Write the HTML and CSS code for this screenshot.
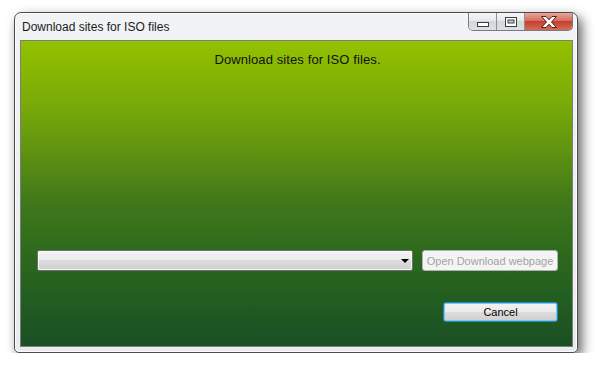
FILE: index.html
```html
<!DOCTYPE html>
<html lang="en">
<head>
  <meta charset="UTF-8" />
  <title>Download sites for ISO files</title>
  <link rel="stylesheet" href="styles.css">
</head>
<body>

  <div class="desktop">
    <div class="window">
      <div class="titlebar">
        <span class="title">Download sites for ISO files</span>
        <div class="caption-btns">
          <span class="cap cap-min">
            <svg width="12" height="5" viewBox="0 0 12 5"><rect x="0.5" y="0.5" width="11" height="4" fill="#fff" stroke="#3a3d42"/></svg>
          </span>
          <span class="cap cap-max">
            <svg width="12" height="10" viewBox="0 0 12 10"><rect x="0.5" y="0.5" width="11" height="9" fill="#fff" stroke="#3a3d42"/><rect x="3" y="3" width="6" height="3" fill="#c8ccd2" stroke="#3a3d42" stroke-width="1"/></svg>
          </span>
          <span class="cap cap-close">
            <svg width="18" height="12" viewBox="0 0 18 12"><path d="M1.5 0.5 L6 0.5 L9 3.8 L12 0.5 L16.5 0.5 L11.5 6 L16.5 11.5 L12 11.5 L9 8.2 L6 11.5 L1.5 11.5 L6.5 6 Z" fill="#fff" stroke="#5a1f18" stroke-width="1" stroke-linejoin="round"/></svg>
          </span>
        </div>
      </div>

      <div class="client">
        <p class="heading">Download sites for ISO files.</p>

        <div class="row">
          <div class="combo"><span class="arrow"></span></div>
          <button class="btn" disabled>Open Download webpage</button>
        </div>

        <div class="footer">
          <button class="btn btn-default">Cancel</button>
        </div>
      </div>
    </div>
  </div>

</body>
</html>
```

FILE: styles.css
```css
body {
  margin: 0;
  background: #fff;
  font-family: "Liberation Sans", Arial, sans-serif;
}
.desktop {
  padding: 12px 0 0 14px;
}
.window {
  width: 564px;
  height: 341px;
  box-sizing: border-box;
  display: flex;
  flex-direction: column;
  padding: 0 4px 5px 5px;
  border: 1px solid #4a4d52;
  border-radius: 7px 7px 5px 5px;
  background: linear-gradient(#f1f3f5, #e9ebec);
  box-shadow: 4px 5px 12px rgba(0, 0, 0, 0.6), inset 0 0 0 1px #fbfbfb;
}
.titlebar {
  height: 27px;
  display: flex;
  align-items: flex-start;
}
.title {
  flex: 1;
  padding: 7px 0 0 2px;
  font-size: 12px;
  color: #1b1b1b;
}
.caption-btns {
  display: flex;
  height: 18px;
  box-sizing: border-box;
  border: 1px solid #777c82;
  border-top: none;
  border-radius: 0 0 5px 5px;
  overflow: hidden;
}
.cap {
  display: flex;
  align-items: center;
  justify-content: center;
  height: 100%;
}
.cap-min, .cap-max {
  width: 27px;
  background: linear-gradient(#f5f6f8 0%, #e6e9ec 45%, #d3d7dc 50%, #dde1e5 100%);
  border-right: 1px solid #8b9096;
}
.cap-min svg {
  margin-top: 5px;
}
.cap-close {
  width: 47px;
  background: linear-gradient(#e9a79c 0%, #d66e5f 45%, #c2412f 50%, #d46a57 100%);
}
.client {
  flex: 1;
  border: 1px solid #7b7f7c;
  padding: 11px 14px 0 16px;
  background: linear-gradient(#94c100 0%, #7aab08 20%, #5f9310 36%, #41791a 52%, #2e6b1c 68%, #225d21 85%, #1a4f25 100%);
}
.heading {
  margin: 0;
  line-height: 16px;
  font-size: 13px;
  letter-spacing: 0.1px;
  text-align: center;
  color: #111;
}
.row {
  display: flex;
  gap: 9px;
  margin-top: 182px;
}
.combo {
  position: relative;
  width: 376px;
  height: 21px;
  box-sizing: border-box;
  border: 1px solid #707070;
  border-radius: 2px;
  background: linear-gradient(#f3f3f3 0%, #ebebeb 50%, #dddddd 50%, #cfcfcf 100%);
  box-shadow: inset 0 0 0 1px rgba(255, 255, 255, 0.7);
}
.arrow {
  position: absolute;
  right: 3px;
  top: 8px;
  border-left: 4px solid transparent;
  border-right: 4px solid transparent;
  border-top: 4px solid #000;
}
.btn {
  height: 21px;
  box-sizing: border-box;
  padding: 0;
  font-family: "Liberation Sans", Arial, sans-serif;
  font-size: 11px;
  border-radius: 3px;
}
.btn:disabled {
  width: 136px;
  border: 1px solid #adb2b5;
  background: #f4f4f4;
  color: #a3a3a3;
}
.footer {
  display: flex;
  justify-content: flex-end;
  margin-top: 31px;
}
.btn-default {
  width: 115px;
  height: 20px;
  color: #000;
  border: 1px solid #3c7fb1;
  background: linear-gradient(#f2f2f2 0%, #ebebeb 50%, #dddddd 50%, #cfcfcf 100%);
  box-shadow: inset 0 0 0 1px #62d0fa;
}
```
